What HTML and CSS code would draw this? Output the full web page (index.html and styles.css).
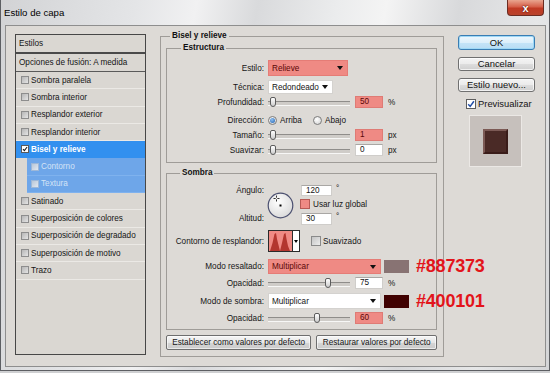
FILE: index.html
```html
<!DOCTYPE html>
<html lang="es">
<head>
<meta charset="utf-8">
<title>Estilo de capa</title>
<link rel="stylesheet" href="styles.css">
</head>
<body>
<div class="window">
  <div class="titlebar">
    <span class="title">Estilo de capa</span>
    <div class="close"><span>x</span></div>
  </div>
  <div class="client">
    <div class="list">
      <div class="li head">Estilos</div>
      <div class="li opts">Opciones de fusión: A medida</div>
      <div class="li"><span class="cb"></span>Sombra paralela</div>
      <div class="li"><span class="cb"></span>Sombra interior</div>
      <div class="li"><span class="cb"></span>Resplandor exterior</div>
      <div class="li"><span class="cb"></span>Resplandor interior</div>
      <div class="li sel"><span class="cb on"><svg width="8" height="8" viewBox="0 0 8 8"><path d="M1.3 4.2 L3.2 6.2 L6.8 1.4" fill="none" stroke="#1a1a1a" stroke-width="1.4"/></svg></span>Bisel y relieve</div>
      <div class="li sub"><span class="cb"></span>Contorno</div>
      <div class="li sub"><span class="cb"></span>Textura</div>
      <div class="li"><span class="cb"></span>Satinado</div>
      <div class="li"><span class="cb"></span>Superposición de colores</div>
      <div class="li"><span class="cb"></span>Superposición de degradado</div>
      <div class="li"><span class="cb"></span>Superposición de motivo</div>
      <div class="li"><span class="cb"></span>Trazo</div>
    </div>

    <fieldset class="grp outer">
      <legend>Bisel y relieve</legend>

      <fieldset class="grp inner estr">
        <legend>Estructura</legend>
        <div class="row h16"><label>Estilo:</label>
          <div class="ctl"><div class="dd red w80 h16">Relieve<i class="arr"></i></div></div></div>
        <div class="row h16 mt3"><label>Técnica:</label>
          <div class="ctl"><div class="dd w65 h14">Redondeado<i class="arr"></i></div></div></div>
        <div class="row h14"><label>Profundidad:</label>
          <div class="ctl"><div class="slider"><span class="thumb" style="left:2px"></span></div><span class="in red">50</span><span class="unit">%</span></div></div>
        <div class="row h16 mt3"><label>Dirección:</label>
          <div class="ctl"><span class="opt"><span class="rd on"></span>Arriba</span><span class="opt"><span class="rd"></span>Abajo</span></div></div>
        <div class="row h14"><label>Tamaño:</label>
          <div class="ctl"><div class="slider"><span class="thumb" style="left:2px"></span></div><span class="in red">1</span><span class="unit">px</span></div></div>
        <div class="row h14 mt1"><label>Suavizar:</label>
          <div class="ctl"><div class="slider"><span class="thumb" style="left:2px"></span></div><span class="in">0</span><span class="unit">px</span></div></div>
      </fieldset>

      <fieldset class="grp inner somb">
        <legend>Sombra</legend>
        <div class="angle">
          <label class="ang-l">Ángulo:</label>
          <div class="dial">
            <svg width="27" height="27" viewBox="0 0 27 27">
              <defs><radialGradient id="dg" cx="40%" cy="35%" r="75%"><stop offset="0" stop-color="#ffffff"/><stop offset="1" stop-color="#d6d6d6"/></radialGradient></defs>
              <circle cx="13.5" cy="13.5" r="12.3" fill="url(#dg)" stroke="#4b5070" stroke-width="1.2"/>
              <rect x="12.5" y="12.5" width="2" height="2" fill="#000"/>
              <path d="M9.5 3.5v2.2M9.5 7.3v2.2M6.5 6.5h2.2M10.3 6.5h2.2" stroke="#333" stroke-width="1"/>
            </svg>
          </div>
          <div class="ang-c"><span class="in w31">120</span><span class="deg">°</span></div>
          <div class="glob"><span class="cb redcb"></span>Usar luz global</div>
          <label class="alt-l">Altitud:</label>
          <div class="alt-c"><span class="in w31">30</span><span class="deg">°</span></div>
        </div>
        <div class="row h22 mt4"><label>Contorno de resplandor:</label>
          <div class="ctl">
            <svg class="contour" width="32" height="22" viewBox="0 0 32 22">
              <rect x="0.5" y="0.5" width="24" height="21" fill="#ef8a84" stroke="#2a2a2a"/>
              <path d="M2 21 L4.5 13 L6.5 4 L8 3 L9 9 L10.5 15 L12 21Z M12 21 L14 13 L16 4 L17.5 3 L18.5 9 L20 16 L22 21Z" fill="#b3362f"/>
              <rect x="24.5" y="0.5" width="7" height="21" fill="#fff" stroke="#2a2a2a"/>
              <path d="M26 10 L30 10 L28 13Z" fill="#000"/>
            </svg>
            <span class="cb gcb"></span><span>Suavizado</span>
          </div></div>
        <div class="row h15 mt7"><label>Modo resaltado:</label>
          <div class="ctl"><div class="dd red w113 h15">Multiplicar<i class="arr"></i></div><span class="sw sw-hi"></span><span class="note">#887373</span></div></div>
        <div class="row h12 mt3"><label>Opacidad:</label>
          <div class="ctl"><div class="slider"><span class="thumb" style="left:57px"></span></div><span class="in">75</span><span class="unit">%</span></div></div>
        <div class="row h16 mt4"><label>Modo de sombra:</label>
          <div class="ctl"><div class="dd w113 h16">Multiplicar<i class="arr"></i></div><span class="sw sw-sh"></span><span class="note">#400101</span></div></div>
        <div class="row h11 mt3"><label>Opacidad:</label>
          <div class="ctl"><div class="slider"><span class="thumb" style="left:46px"></span></div><span class="in red">60</span><span class="unit">%</span></div></div>
      </fieldset>

      <div class="btnrow">
        <button class="btn b1">Establecer como valores por defecto</button>
        <button class="btn b2">Restaurar valores por defecto</button>
      </div>
    </fieldset>

    <div class="side">
      <button class="sbtn def">OK</button>
      <button class="sbtn">Cancelar</button>
      <button class="sbtn">Estilo nuevo...</button>
      <div class="prev"><span class="pcb"><svg width="8" height="8" viewBox="0 0 8 8"><path d="M1.2 4.2 L3.2 6.4 L6.9 1.2" fill="none" stroke="#2450a8" stroke-width="1.5"/></svg></span>Previsualizar</div>
      <div class="preview"><div class="swatchbox"></div></div>
    </div>
  </div>
</div>
</body>
</html>
```

FILE: styles.css
```css
* { box-sizing: border-box; }
html, body { margin: 0; padding: 0; }
body {
  width: 550px; height: 373px; overflow: hidden;
  background: #cfd0d2;
  font-family: "Liberation Sans", Arial, sans-serif;
  font-size: 8.2px; color: #151515;
}
.window {
  width: 550px; height: 371px;
  display: flex; flex-direction: column;
  border: 1px solid #5d5f63; border-top: 0;
  background: linear-gradient(100deg, #d2d3d5 0%, #e4e5e7 22%, #f1f1f2 32%, #d9dadc 42%, #ebeced 55%, #f4f4f4 63%, #d8d9db 75%, #e6e7e8 88%, #d4d5d7 100%);
}
.titlebar {
  height: 25px; flex: none;
  display: flex; justify-content: space-between; align-items: flex-start;
  padding-left: 3px;
}
.title { font-size: 9.6px; color: #000; line-height: 25px; }
.close {
  width: 37px; height: 16px; margin-right: 5px;
  border: 1px solid #6b2c22; border-top: 0;
  border-radius: 0 0 4px 4px;
  background: linear-gradient(#e9a58f 0%, #d6604a 45%, #c13a24 55%, #b8432c 100%);
  display: flex; align-items: center; justify-content: center;
}
.close span { color: #fff; font-weight: bold; font-size: 11px; line-height: 12px; text-shadow: 0 0 2px #5a1208, 0 0 1px #5a1208; }

.client {
  flex: 1;
  margin: 0 3px 3px 4px;
  border: 1px solid #8e8e8e;
  background: #dddad6;
  display: flex; align-items: flex-start;
  padding-left: 9px;
}

/* list */
.list {
  width: 131px; height: 321px; margin-top: 8px;
  border: 1px solid #474747;
  background: #dad7d2;
  flex: none;
}
.li {
  height: 17.3px;
  display: flex; align-items: center;
  padding-left: 5px;
  border-bottom: 1px solid #ebe9e5;
  white-space: nowrap;
}
.li.head { height: 19px; padding-left: 3px; border-bottom: 2px solid #4a4a4a; }
.li.opts { height: 18px; padding-left: 3px; border-bottom: 1px solid #5a5a5a; }
.li.sel { background: #3290ef; color: #fff; font-weight: bold; border-bottom-color: #3290ef; }
.li.sub { background: #6ea6e9; color: #d4e3f6; margin-left: 11px; padding-left: 4px; border-bottom-color: #7fb2ee; }
.cb {
  width: 8px; height: 8px; margin-right: 2px; flex: none;
  border: 1px solid #8d8d8d;
  background: linear-gradient(135deg, #b6b6b6, #e4e4e4);
  display: inline-flex; align-items: center; justify-content: center;
}
.cb.on { background: #fff; border-color: #5a5a5a; }
.cb.on svg { display: block; }
.li.sub .cb { border-color: #9eb8d8; background: linear-gradient(135deg, #b9c7d8, #e2e8f0); }

/* group boxes */
fieldset.grp {
  margin: 0; min-width: 0;
  border: 1px solid #9f9c98;
}
fieldset.grp legend {
  font-weight: bold; line-height: 10px; padding: 0 2px; color: #111;
}
.outer {
  width: 284px; margin-left: 14px !important; margin-top: 5px !important;
  padding: 2px 6px 6px 5px;
  flex: none;
}
.outer > legend { margin-left: 4px; }
.inner { width: 271px; padding: 0; }
.estr { padding: 7px 0 5px 0; }
.estr > legend { margin-left: 14px; }
.somb { margin-top: 5px !important; padding: 6px 0 6px 0; }
.somb > legend { margin-left: 13px; }

.row {
  display: grid; grid-template-columns: 97px 1fr; column-gap: 4px;
  align-items: center;
}
.row > label { text-align: right; white-space: nowrap; }
.ctl { display: flex; align-items: center; white-space: nowrap; }
.h11 { height: 11px; } .h12 { height: 12px; } .h14 { height: 14px; }
.h15 { height: 15px; } .h16 { height: 16px; } .h22 { height: 22px; }
.mt1 { margin-top: 1px; } .mt3 { margin-top: 3px; } .mt4 { margin-top: 4px; } .mt7 { margin-top: 7px; }

.dd {
  display: flex; align-items: center; justify-content: space-between;
  background: #fff; border: 1px solid #d4d2cf;
  padding: 0 4px 0 3px; color: #141414;
}
.dd.red { background: #ef8a84; border-color: #e57c76; color: #5a0707; }
.w65 { width: 65px; } .w80 { width: 80px; } .w113 { width: 113px; }
.dd.h14 { height: 14px; } .dd.h15 { height: 15px; } .dd.h16 { height: 16px; }
.arr {
  width: 0; height: 0;
  border-left: 3.5px solid transparent; border-right: 3.5px solid transparent;
  border-top: 4px solid #111;
}

.slider { position: relative; width: 82px; height: 10px; flex: none; }
.slider::before {
  content: ""; position: absolute; left: 0; right: 0; top: 4px; height: 3px;
  border-top: 1px solid #8f8d8a; border-bottom: 1px solid #f7f7f6; background: #cfccc8;
}
.thumb {
  position: absolute; top: 0; width: 6px; height: 10px;
  border: 1px solid #5c5c5c; border-radius: 2px 2px 3px 3px;
  background: linear-gradient(#ffffff, #cdcdcd);
}
.in {
  width: 28px; height: 12px; margin-left: 5px; flex: none;
  background: #fff; border: 1px solid #cfcdca; border-top-color: #a9a7a4;
  padding-left: 4px; line-height: 10px; color: #141414;
}
.in.red { background: #ef8a84; border-color: #df7b75; color: #5a0707; }
.in.w31 { width: 31px; margin-left: 0; }
.unit { margin-left: 5px; }
.deg { margin-left: 4px; align-self: flex-start; line-height: 8px; }

.opt { display: inline-flex; align-items: center; }
.opt:first-child { width: 45px; }
.rd {
  width: 9px; height: 9px; border-radius: 50%; margin-right: 3px;
  border: 1px solid #7c7c7c;
  background: radial-gradient(circle at 40% 35%, #ffffff, #cfcfcf);
  display: inline-flex; align-items: center; justify-content: center;
}
.rd.on::after {
  content: ""; width: 5px; height: 5px; border-radius: 50%;
  background: radial-gradient(circle at 40% 35%, #8fc0f0, #1d5fb0);
}

.angle {
  display: grid;
  grid-template-columns: 97px 29px 1fr;
  grid-template-rows: 13px 14px 15px;
  column-gap: 4px;
  align-items: center;
}
.angle label { text-align: right; white-space: nowrap; grid-column: 1; }
.ang-l { grid-row: 1; }
.alt-l { grid-row: 3; }
.dial { grid-column: 2; grid-row: 1 / 4; align-self: center; height: 27px; margin-left: -1px; }
.dial svg { display: block; }
.ang-c { grid-column: 3; grid-row: 1; display: flex; height: 11px; }
.glob { grid-column: 3; grid-row: 2; display: flex; align-items: center; white-space: nowrap; margin-left: -1px; }
.alt-c { grid-column: 3; grid-row: 3; display: flex; height: 12px; }
.ang-c .in, .alt-c .in { height: 100%; }
.redcb { width: 10px; height: 10px; background: #ef8a84; border-color: #b85a55; margin-right: 3px; }
.gcb { width: 10px; height: 10px; margin-left: 11px; margin-right: 2px; background: linear-gradient(135deg, #c4c4c4, #ececec); border-color: #8a8a8a; }
.contour { display: block; flex: none; }

.sw { width: 25px; height: 13px; margin-left: 3px; flex: none; }
.sw-hi { background: #887373; }
.sw-sh { background: #400101; }
.note {
  margin-left: 7px;
  font-weight: bold; font-size: 18px; line-height: 15px;
  color: #e3141b; letter-spacing: -0.2px;
}

.btnrow { display: flex; gap: 5px; margin-top: 5px; }
.btn {
  height: 15px; padding: 0; margin: 0;
  font-family: "Liberation Sans", Arial, sans-serif; font-size: 8.2px; color: #151515;
  border: 1px solid #6e6e6e; border-radius: 2px;
  background: linear-gradient(#f6f6f6 0%, #e6e6e6 50%, #d6d6d6 51%, #cacaca 100%);
  box-shadow: inset 0 0 0 1px rgba(255,255,255,0.6);
}
.b1 { width: 146px; }
.b2 { width: 121px; }

.side {
  width: 77px; margin-left: 14px; margin-top: 9px;
  display: flex; flex-direction: column; flex: none;
}
.sbtn {
  height: 14px; padding: 0; margin: 0 0 7px 0;
  font-family: "Liberation Sans", Arial, sans-serif; font-size: 9.4px; color: #111;
  border: 1px solid #707070; border-radius: 3px;
  background: linear-gradient(#f4f4f4 0%, #ebebeb 50%, #dddddd 51%, #cfcfcf 100%);
  box-shadow: inset 0 0 0 1px rgba(255,255,255,0.7);
  line-height: 12px;
}
.sbtn.def {
  height: 15px;
  border-color: #3a7db3;
  background: linear-gradient(#eef7fd 0%, #dceffb 50%, #c4e4f8 51%, #b8dcf4 100%);
  box-shadow: inset 0 0 0 1px #9ed8f6;
}
.prev {
  display: flex; align-items: center; white-space: nowrap;
  margin-top: -1px; height: 11px; padding-left: 8px;
  font-size: 9.4px;
}
.pcb {
  width: 10px; height: 10px; margin-right: 2px;
  border: 1px solid #5e5e5e; background: #fff;
  display: inline-flex; align-items: center; justify-content: center;
}
.pcb svg { display: block; }
.preview {
  width: 53px; height: 52px; margin-top: 6px; margin-left: 11px;
  background: #c6c0bc; border: 1px solid #ebe8e5;
  display: flex; align-items: center; justify-content: center;
}
.swatchbox {
  width: 25px; height: 25px;
  background: #4a2a26;
  border: 2px solid #6f4c47;
  border-top-color: #7c5a55; border-left-color: #7c5a55;
  border-bottom-color: #3a1c19; border-right-color: #3a1c19;
}
```
